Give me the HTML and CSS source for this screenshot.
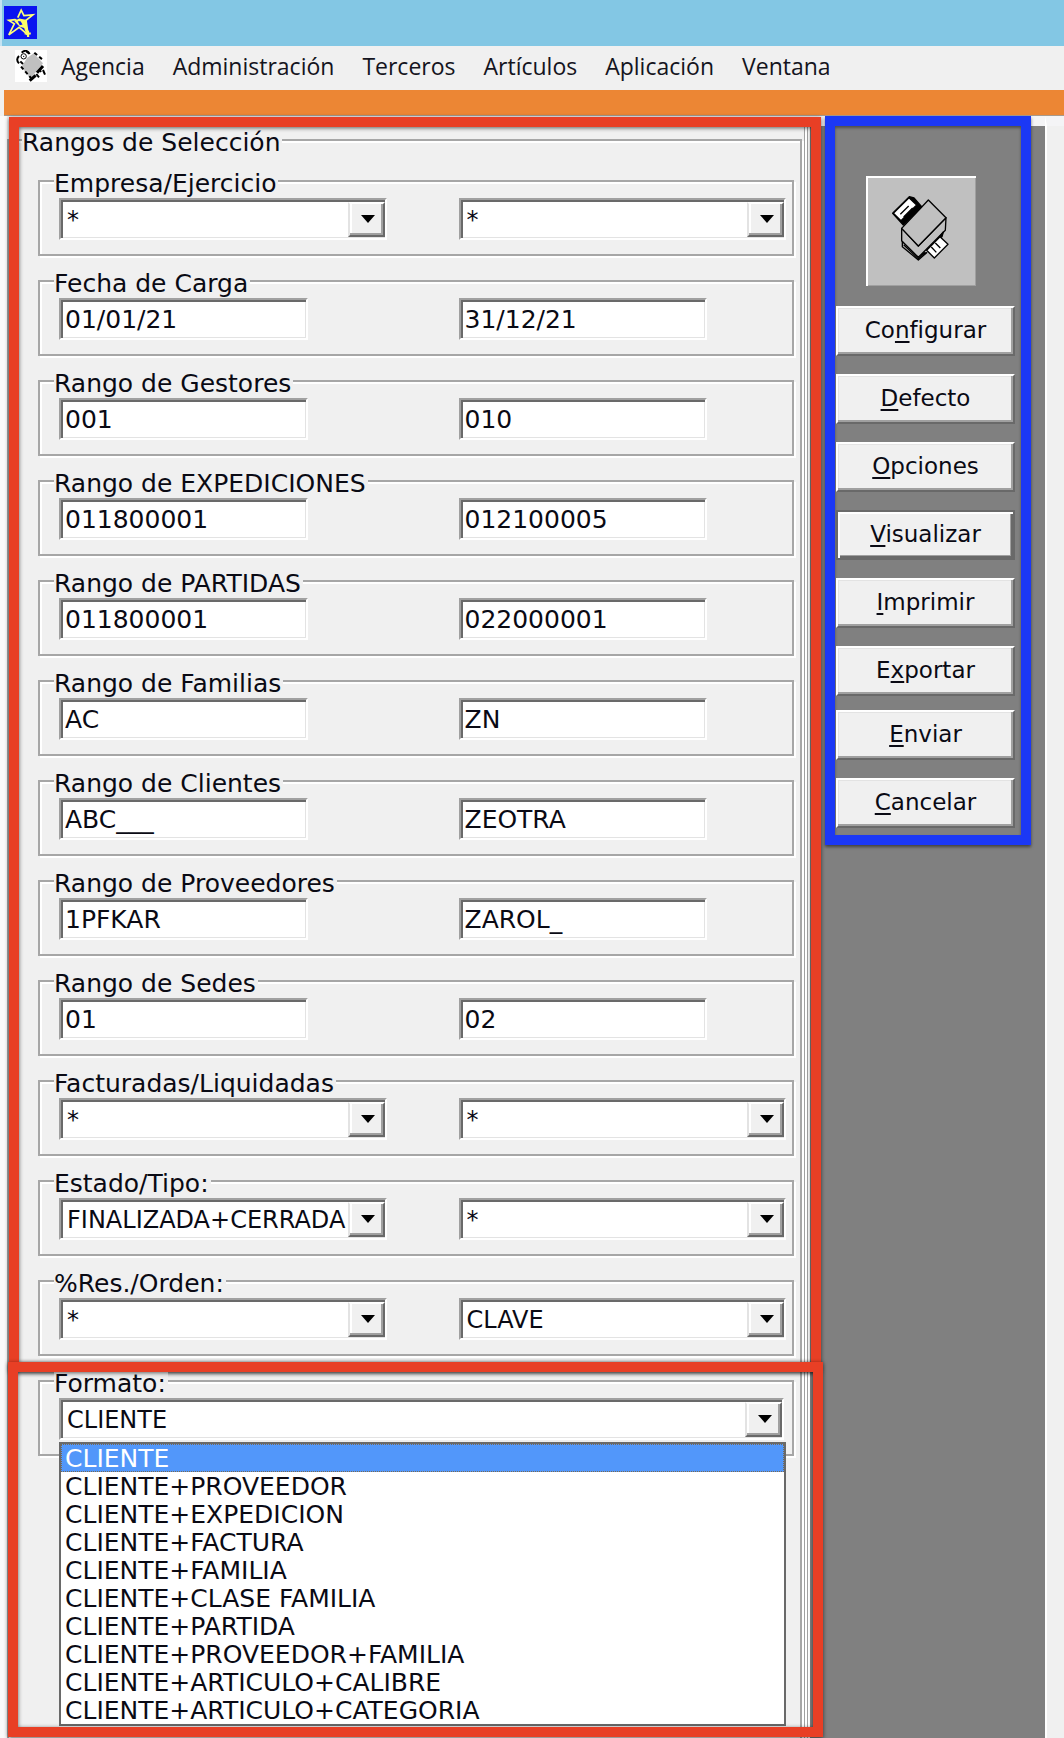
FILE: index.html
```html
<!DOCTYPE html>
<html lang="es">
<head>
    <meta charset="UTF-8">
    <meta name="viewport" content="width=device-width, initial-scale=1.0">
    <title>Rangos de Selección</title>
    <link rel="stylesheet" href="styles.css">
</head>
<body>
    <header class="titlebar">
        <svg class="app-icon" viewBox="0 0 96 96" aria-hidden="true">
            <rect width="96" height="96" fill="#0a14f0"/>
            <path d="M40 34L50 12L58 28L84 26L64 42L70 84L44 62L14 84L30 52L14 42L32 40L64 56" fill="none" stroke="#ffff77" stroke-width="5"/>
            <path d="M30 44L44 36L64 40L66 66L46 60Z" fill="#ffff66"/>
            <path d="M40 44L48 44L54 54L46 56Z" fill="#0a14f0"/>
            <path d="M62 60L70 84" stroke="#ffff66" stroke-width="9"/>
            <path d="M60 80H78M70 72V90" stroke="#ffff66" stroke-width="6"/>
        </svg>
    </header>

    <nav class="menubar">
        <svg class="menu-icon" viewBox="0 0 96 96" aria-hidden="true">
            <rect width="96" height="96" fill="#fff"/>
            <path d="M36 24L56 10L84 40L46 86L20 50Z" fill="#c0c0c0"/>
            <path d="M12 40C4 32 6 24 12 18M20 8C28 0 38 0 44 12M16 34L24 42M34 4L42 10" fill="none" stroke="#000" stroke-width="6"/>
            <circle cx="26" cy="19" r="8" fill="#fff" stroke="#000" stroke-width="3"/>
            <circle cx="26" cy="19" r="2"/>
            <path d="M58 8L84 30M18 50L48 84" fill="none" stroke="#000" stroke-width="6" stroke-dasharray="11 8"/>
            <path d="M44 92L62 76M66 68L84 48" stroke="#000" stroke-width="9"/>
            <path d="M64 72L72 82M74 60L78 66M84 60L90 74" stroke="#000" stroke-width="6"/>
        </svg>
        <a href="#">Agencia</a>
        <a href="#">Administración</a>
        <a href="#">Terceros</a>
        <a href="#">Artículos</a>
        <a href="#">Aplicación</a>
        <a href="#">Ventana</a>
    </nav>

    <div class="toolbar"></div>

    <main class="workspace">
        <form class="form-area">
            <fieldset class="panel">
                <legend>Rangos de Selección</legend>

                <section class="ranges frame">
                    <fieldset class="group">
                        <legend>Empresa/Ejercicio</legend>
                        <div class="pair">
                            <div class="combo"><select aria-label="Empresa"><option>*</option></select></div>
                            <div class="combo"><select aria-label="Ejercicio"><option>*</option></select></div>
                        </div>
                    </fieldset>
                    <fieldset class="group">
                        <legend>Fecha de Carga</legend>
                        <div class="pair">
                            <input type="text" aria-label="Fecha de carga desde" value="01/01/21">
                            <input type="text" aria-label="Fecha de carga hasta" value="31/12/21">
                        </div>
                    </fieldset>
                    <fieldset class="group">
                        <legend>Rango de Gestores</legend>
                        <div class="pair">
                            <input type="text" aria-label="Gestor desde" value="001">
                            <input type="text" aria-label="Gestor hasta" value="010">
                        </div>
                    </fieldset>
                    <fieldset class="group">
                        <legend>Rango de EXPEDICIONES</legend>
                        <div class="pair">
                            <input type="text" aria-label="Expedición desde" value="011800001">
                            <input type="text" aria-label="Expedición hasta" value="012100005">
                        </div>
                    </fieldset>
                    <fieldset class="group">
                        <legend>Rango de PARTIDAS</legend>
                        <div class="pair">
                            <input type="text" aria-label="Partida desde" value="011800001">
                            <input type="text" aria-label="Partida hasta" value="022000001">
                        </div>
                    </fieldset>
                    <fieldset class="group">
                        <legend>Rango de Familias</legend>
                        <div class="pair">
                            <input type="text" aria-label="Familia desde" value="AC">
                            <input type="text" aria-label="Familia hasta" value="ZN">
                        </div>
                    </fieldset>
                    <fieldset class="group">
                        <legend>Rango de Clientes</legend>
                        <div class="pair">
                            <input type="text" aria-label="Cliente desde" value="ABC___">
                            <input type="text" aria-label="Cliente hasta" value="ZEOTRA">
                        </div>
                    </fieldset>
                    <fieldset class="group">
                        <legend>Rango de Proveedores</legend>
                        <div class="pair">
                            <input type="text" aria-label="Proveedor desde" value="1PFKAR">
                            <input type="text" aria-label="Proveedor hasta" value="ZAROL_">
                        </div>
                    </fieldset>
                    <fieldset class="group">
                        <legend>Rango de Sedes</legend>
                        <div class="pair">
                            <input type="text" aria-label="Sede desde" value="01">
                            <input type="text" aria-label="Sede hasta" value="02">
                        </div>
                    </fieldset>
                    <fieldset class="group">
                        <legend>Facturadas/Liquidadas</legend>
                        <div class="pair">
                            <div class="combo"><select aria-label="Facturadas"><option>*</option></select></div>
                            <div class="combo"><select aria-label="Liquidadas"><option>*</option></select></div>
                        </div>
                    </fieldset>
                    <fieldset class="group">
                        <legend>Estado/Tipo:</legend>
                        <div class="pair">
                            <div class="combo"><select aria-label="Estado"><option>FINALIZADA+CERRADA</option></select></div>
                            <div class="combo"><select aria-label="Tipo"><option>*</option></select></div>
                        </div>
                    </fieldset>
                    <fieldset class="group">
                        <legend>%Res./Orden:</legend>
                        <div class="pair">
                            <div class="combo"><select aria-label="% Resultado"><option>*</option></select></div>
                            <div class="combo"><select aria-label="Orden"><option>CLAVE</option></select></div>
                        </div>
                    </fieldset>
                </section>

                <section class="format frame">
                    <fieldset class="group">
                        <legend>Formato:</legend>
                        <div class="dropdown">
                            <div class="combo"><select aria-label="Formato"><option>CLIENTE</option></select></div>
                            <ul class="options" role="listbox" aria-label="Formato">
                                <li class="selected" role="option" aria-selected="true">CLIENTE</li>
                                <li role="option">CLIENTE+PROVEEDOR</li>
                                <li role="option">CLIENTE+EXPEDICION</li>
                                <li role="option">CLIENTE+FACTURA</li>
                                <li role="option">CLIENTE+FAMILIA</li>
                                <li role="option">CLIENTE+CLASE FAMILIA</li>
                                <li role="option">CLIENTE+PARTIDA</li>
                                <li role="option">CLIENTE+PROVEEDOR+FAMILIA</li>
                                <li role="option">CLIENTE+ARTICULO+CALIBRE</li>
                                <li role="option">CLIENTE+ARTICULO+CATEGORIA</li>
                            </ul>
                        </div>
                    </fieldset>
                </section>
            </fieldset>
        </form>

        <aside class="side">
            <div class="actions">
                <div class="picture">
                    <svg viewBox="0 0 330 330" aria-hidden="true">
                        <g stroke="#000" stroke-width="4" stroke-linejoin="round">
                            <path d="M109 196L109 212L157 252L182 230L157 238Z" fill="#c0c0c0"/>
                            <path d="M107 157V194L157 244L238 163L240 125L157 210Z" fill="#c0c0c0"/>
                            <path d="M113 206L157 248L178 229" fill="none"/>
                            <path d="M187 72L240 125L157 210L107 157Z" fill="#c0c0c0"/>
                            <path d="M130 62L80 112L112 147L167 92L144 66Z" fill="#000"/>
                            <path d="M129 65L82 112L105 134L152 87Z" fill="#fff"/>
                            <path d="M103 115L128 90M113 123L140 96" fill="none"/>
                            <path d="M232 168L228 182L214 190Z" fill="#000"/>
                            <path d="M222 182L246 205L205 246L182 223Z" fill="#fff"/>
                            <path d="M196 213L211 229M208 201L223 216" fill="none"/>
                        </g>
                    </svg>
                </div>
                <button type="button">Co<u>n</u>figurar</button>
                <button type="button"><u>D</u>efecto</button>
                <button type="button"><u>O</u>pciones</button>
                <button type="button" class="default"><u>V</u>isualizar</button>
                <button type="button"><u>I</u>mprimir</button>
                <button type="button">E<u>x</u>portar</button>
                <button type="button" class="tight"><u>E</u>nviar</button>
                <button type="button"><u>C</u>ancelar</button>
            </div>
        </aside>
        <div class="edge"></div>
    </main>
</body>
</html>
```

FILE: styles.css
```css
* {
    box-sizing: border-box;
}
body {
    margin: 0;
    min-height: 100vh;
    display: flex;
    flex-direction: column;
    background: #f0f0f0;
    color: #0a0a14;
    font-family: Verdana, "DejaVu Sans", sans-serif;
    font-size: 25px;
}
/* top bars */
.titlebar {
    height: 46px;
    padding: 6px 0 0 2px;
    background: #83c7e4;
    border-left: 2px solid #c4e3f2;
}
.app-icon {
    display: block;
    width: 33px;
    height: 33px;
}
.menubar {
    display: flex;
    align-items: center;
    gap: 28px;
    height: 44px;
    padding: 0 15px 4px;
    background: #f0f0f0;
    font-family: "Segoe UI", "Open Sans", sans-serif;
    font-size: 23px;
}
.menubar a {
    color: #141420;
    text-decoration: none;
}
.menu-icon {
    width: 32px;
    height: 32px;
    margin-right: -14px;
}
.toolbar {
    height: 26px;
    margin-left: 4px;
    background: #ec8634;
    border-bottom: 1px solid #a89a8c;
}
.workspace {
    flex: 1;
    display: flex;
}
/* left form */
.form-area {
    flex: 1;
    min-width: 0;
    display: flex;
    padding: 7px 0 0 7px;
    background: linear-gradient(to right, #fafafa 7px, #f0f0f0 7px);
}
.form-area::after {
    content: "";
    width: 5px;
    margin: 3px 0 0 2px;
    background: #fff;
    border-left: 1px solid #a0a0a0;
    box-shadow: inset 2px 0 #fff, inset 3px 0 #a0a0a0;
}
fieldset {
    margin: 0;
    min-width: 0;
    border: 2px solid #a6a6a6;
    box-shadow: 2px 2px #fff, inset 2px 2px #fff;
}
legend {
    padding: 6px 2px 0 0;
    line-height: 28px;
    background: #f0f0f0;
}
.panel {
    flex: 1;
    display: flex;
    flex-direction: column;
    gap: 8px;
    padding: 7px 6px 0 29px;
    border-bottom: 0;
}
.panel > legend {
    margin-left: -16px;
}
.ranges {
    display: flex;
    flex-direction: column;
    gap: 8px;
}
.group {
    height: 92px;
    padding: 0 6px 0 19px;
}
.group > legend {
    margin-left: -5px;
}
.pair {
    display: grid;
    grid-template-columns: 1fr 1fr;
    column-gap: 72px;
}
input, select {
    height: 42px;
    margin: 0;
    border: 2px solid;
    border-color: #a0a0a0 #fff #fff #a0a0a0;
    border-radius: 0;
    box-shadow: inset 2px 2px #696969, inset -1px -1px #e3e3e3;
    background: #fff;
    color: inherit;
    font-family: inherit;
    outline: none;
}
input {
    width: 76%;
    padding: 0 4px;
    font-size: 25px;
}
select {
    display: block;
    width: 100%;
    padding: 2px 30px 0 6px;
    font-size: 24px;
    appearance: none;
}
.combo {
    position: relative;
}
/* arrow button of the combo */
.combo::before {
    content: "";
    position: absolute;
    top: 4px;
    right: 2px;
    bottom: 3px;
    width: 33px;
    background: #f0f0f0;
    border: 2px solid;
    border-color: #fff #696969 #696969 #e3e3e3;
    box-shadow: inset -2px -2px #a0a0a0, inset 2px 0 #fff;
    pointer-events: none;
}
.combo::after {
    content: "";
    position: absolute;
    top: 17px;
    right: 12px;
    border: 7px solid transparent;
    border-top: 8px solid #000;
    border-bottom: 0;
    pointer-events: none;
}
.format {
    flex: 1;
    min-height: 373px;
}
.dropdown {
    position: relative;
}
.dropdown .combo {
    margin-right: 2px;
}
.options {
    position: absolute;
    top: 44px;
    left: 0;
    right: 0;
    margin: 0;
    padding: 0;
    list-style: none;
    background: #fff;
    border: 2px solid #696969;
    line-height: 28px;
}
.options li {
    height: 28px;
    padding: 1px 0 0 4px;
}
.options .selected {
    background: #5297fa;
    color: #fff;
    outline: 1px dotted #7a6a50;
    outline-offset: -1px;
}
/* coloured outlines round each block */
.frame {
    position: relative;
}
.frame::after {
    content: "";
    position: absolute;
    border: 10px solid #e83f25;
    filter: drop-shadow(0 1px 2px rgba(0, 0, 0, 0.6));
    pointer-events: none;
}
.ranges::after {
    inset: -47px -27px -16px -29px;
}
.format::after {
    inset: -2px -29px 1px -30px;
}
/* right column */
.side {
    width: 235px;
    padding-left: 15px;
    background: #808080;
    border-top: 10px solid #f4f4f6;
}
.actions {
    display: flex;
    flex-direction: column;
    gap: 18px;
    width: 206px;
    margin-top: -10px;
    padding: 50px 6px 7px 1px;
    border: 10px solid #1b38f5;
    box-shadow: 0 2px 3px rgba(0, 0, 0, 0.5), inset 0 2px 3px rgba(0, 0, 0, 0.4);
}
.picture {
    width: 110px;
    height: 110px;
    margin: 0 0 2px 30px;
    background: #c0c0c0;
    box-shadow: inset 2px 2px #fff, inset -1px -1px #a0a0a0;
}
.picture svg {
    display: block;
}
button {
    height: 50px;
    padding: 0 0 2px;
    border: 2px solid;
    border-color: #fff #696969 #696969 #fff;
    border-radius: 0;
    box-shadow: inset -2px -2px #a0a0a0, inset 1px 1px #e3e3e3;
    background: #f0f0f0;
    color: inherit;
    font-family: inherit;
    font-size: 23px;
}
button u {
    text-underline-offset: 3px;
}
.default {
    border-color: #696969;
    box-shadow: inset 2px 2px #fff, inset -2px -2px #696969, inset -3px -3px #a0a0a0;
}
.tight {
    margin-top: -4px;
}
.edge {
    width: 19px;
    border-left: 2px solid #fff;
    border-top: 10px solid #f4f4f6;
}
```
